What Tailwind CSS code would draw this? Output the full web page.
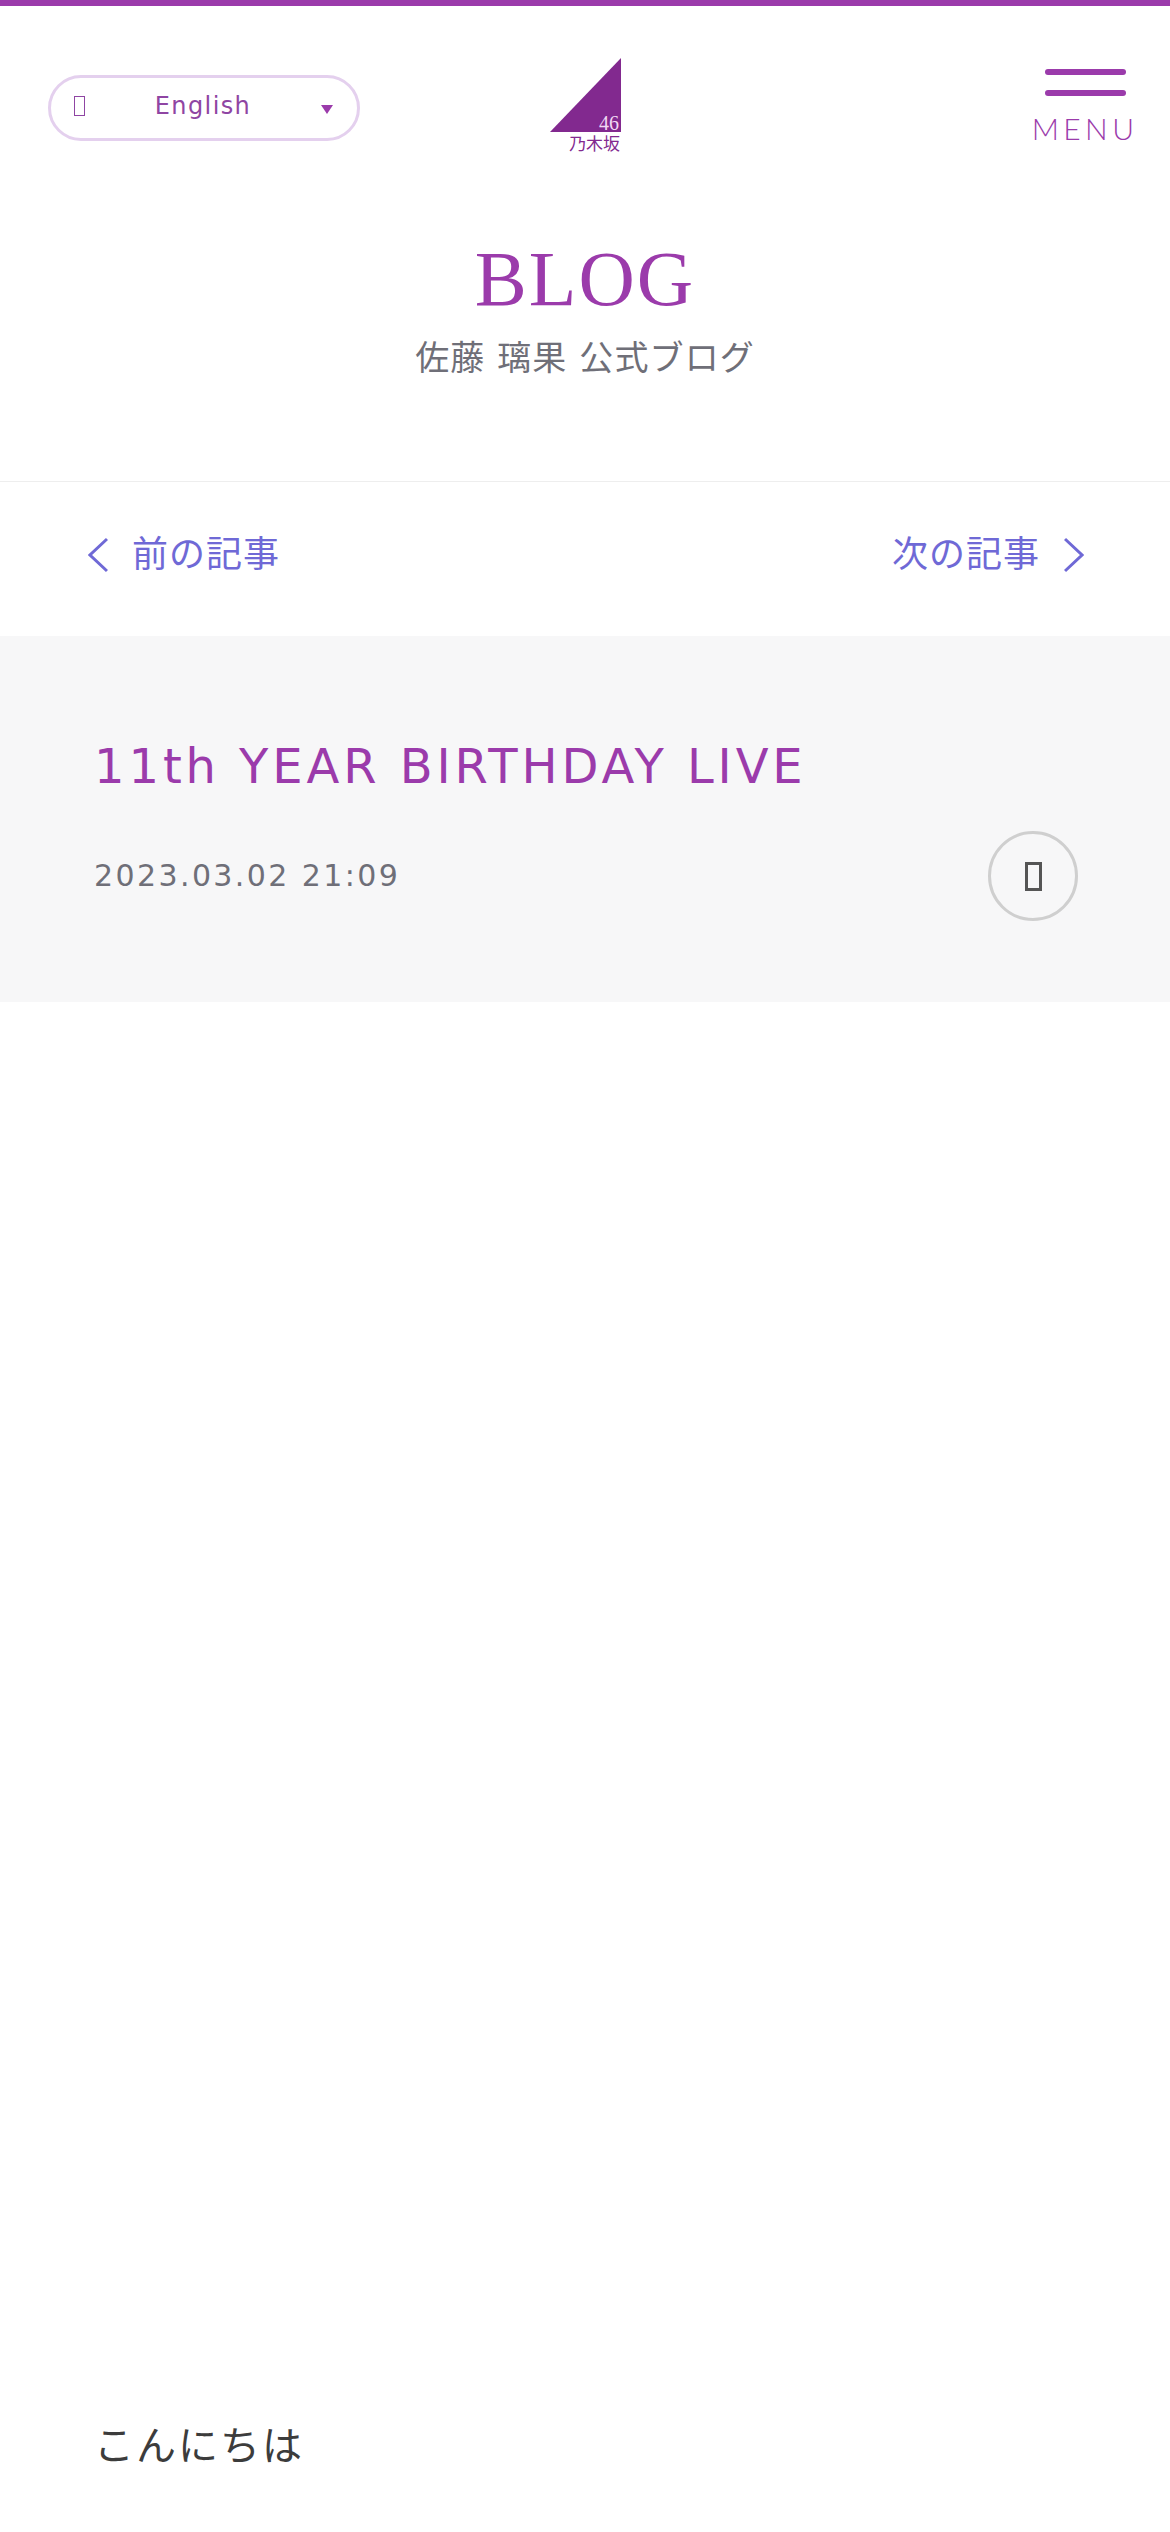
<!DOCTYPE html>
<html lang="ja">
<head>
<meta charset="utf-8">
<script src="https://cdn.jsdelivr.net/npm/@tailwindcss/browser@4"></script>
</head>
<body class="bg-white font-['DejaVu_Sans','Noto_Sans_CJK_JP',sans-serif] overflow-hidden">
<div class="w-[1170px] h-[2532px] overflow-hidden flex flex-col">
  <div class="h-[6px] bg-[#9b3bab]"></div>
  <header class="h-[208px] flex items-start">
    <div class="w-[550px] shrink-0 pt-[69px] pl-[48px]">
      <div class="w-[312px] h-[66px] rounded-[33px] border-[3px] border-[#e4d0ee] flex items-center pl-[23px] pr-[24px] text-[#8f45a3]">
        <span class="w-[11px] h-[20px] border-[1.5px] border-[#8f45a3] shrink-0 -mt-[4px]"></span>
        <span class="flex-1 text-center text-[24px] leading-none tracking-[1.4px] -mt-[4px]">English</span>
        <svg class="w-[12px] h-[9px] shrink-0 mt-[3px]" viewBox="0 0 12 9"><path d="M0 0h12L6 9z" fill="#9b3bab"/></svg>
      </div>
    </div>
    <div class="mt-[52px] w-[71px] relative">
      <svg class="block w-[71px] h-[74px]" viewBox="0 0 71 74"><path d="M0 74 71 0v74z" fill="#82298f"/></svg>
      <span class="absolute right-[2px] top-[55px] text-[20px] leading-none text-[#f0d8f4] font-['Liberation_Serif',serif]">46</span>
      <span class="absolute left-[19px] top-[76px] text-[17px] leading-[18px] whitespace-nowrap text-[#82298f] font-['Noto_Sans_CJK_JP',sans-serif]">乃木坂</span>
    </div>
    <div class="ml-auto mt-[63px] mr-[34px] w-[102px] flex flex-col items-center">
      <div class="w-[81px] h-[6px] rounded-full bg-[#9b3bab]"></div>
      <div class="w-[81px] h-[6px] rounded-full bg-[#9b3bab] mt-[15px]"></div>
      <div class="mt-[18px] text-[30px] leading-[28px] tracking-[4.4px] whitespace-nowrap text-[#9b3bab] font-['Lato',sans-serif] font-light">MENU</div>
    </div>
  </header>
  <section class="h-[268px] flex flex-col items-center border-b border-[#eeeeee]">
    <h1 class="text-[78px] leading-[90px] mt-[20px] tracking-[2px] text-[#9b3bab] font-['Liberation_Serif',serif]">BLOG</h1>
    <p class="text-[34px] leading-[44px] mt-[12px] tracking-[1.1px] text-[#6f6f78]">佐藤 璃果 公式ブログ</p>
  </section>
  <nav class="h-[154px] flex justify-between items-start pt-[51px] pl-[88px] pr-[86px] text-[#6f69d6] text-[36px] leading-[44px] tracking-[1px]">
    <a class="flex items-center gap-[24px]">
      <svg class="w-[20px] h-[36px]" viewBox="0 0 20 36" fill="none" stroke="#6f69d6" stroke-width="3"><path d="M19 2 2 18l17 16"/></svg>
      <span>前の記事</span>
    </a>
    <a class="flex items-center gap-[24px]">
      <span>次の記事</span>
      <svg class="w-[20px] h-[36px]" viewBox="0 0 20 36" fill="none" stroke="#6f69d6" stroke-width="3"><path d="M1 2l17 16L1 34"/></svg>
    </a>
  </nav>
  <section class="h-[366px] bg-[#f7f7f8] px-[94px] pt-[100px]">
    <h2 class="text-[48px] leading-[60px] tracking-[3.9px] text-[#9b3bab]">11th YEAR BIRTHDAY LIVE</h2>
    <div class="flex justify-between items-center mt-[35px] -mr-[2px]">
      <time class="text-[30px] leading-[40px] tracking-[2.4px] text-[#6f6f78]">2023.03.02 21:09</time>
      <div class="w-[90px] h-[90px] rounded-full border-[3px] border-[#cfcfcf] flex items-center justify-center">
        <span class="w-[17px] h-[29px] border-[3px] border-[#555555]"></span>
      </div>
    </div>
  </section>
  <main class="px-[94px] pt-[1414px]">
    <p class="text-[40px] leading-[60px] tracking-[2px] text-[#3c3c3c]">こんにちは</p>
  </main>
</div>
</body>
</html>
